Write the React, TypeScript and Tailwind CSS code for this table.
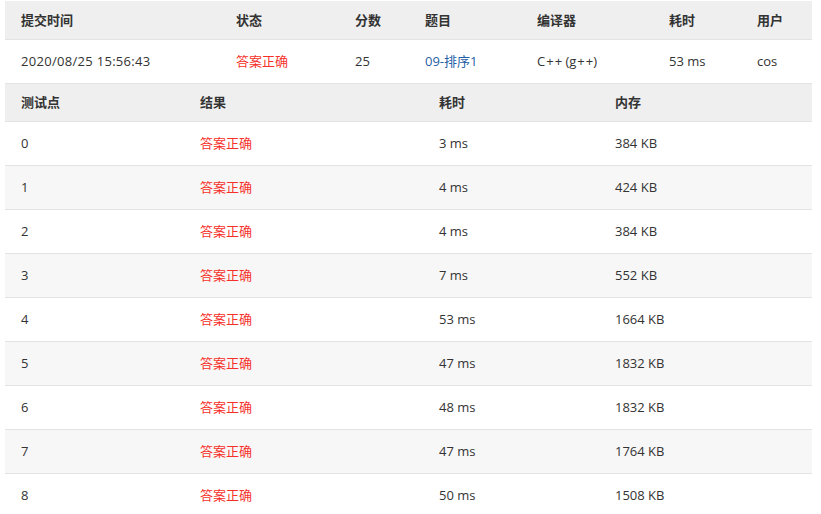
const font = { fontFamily: '"Open Sans", "Noto Sans CJK SC", sans-serif' }

const cases = [
  ['0', '3 ms', '384 KB'],
  ['1', '4 ms', '424 KB'],
  ['2', '4 ms', '384 KB'],
  ['3', '7 ms', '552 KB'],
  ['4', '53 ms', '1664 KB'],
  ['5', '47 ms', '1832 KB'],
  ['6', '48 ms', '1832 KB'],
  ['7', '47 ms', '1764 KB'],
  ['8', '50 ms', '1508 KB'],
]

export default function App() {
  return (
    <div className="w-[821px] h-[514px] overflow-hidden bg-white pt-px px-[5px] text-[13px] text-[#333]" style={font}>
      <div className="w-[807px]">
        <table className="w-full table-fixed border-collapse">
          <colgroup>
            <col className="w-[215px]" />
            <col className="w-[119px]" />
            <col className="w-[70px]" />
            <col className="w-[112px]" />
            <col className="w-[132px]" />
            <col className="w-[88px]" />
            <col />
          </colgroup>
          <thead>
            <tr className="h-[38px] bg-[#efefef] border-b border-[#e3e3e3] font-bold text-left">
              <th className="pl-4 pt-[2px] font-bold">提交时间</th>
              <th className="pl-4 pt-[2px] font-bold">状态</th>
              <th className="pl-4 pt-[2px] font-bold">分数</th>
              <th className="pl-4 pt-[2px] font-bold">题目</th>
              <th className="pl-4 pt-[2px] font-bold">编译器</th>
              <th className="pl-4 pt-[2px] font-bold">耗时</th>
              <th className="pl-4 pt-[2px] font-bold">用户</th>
            </tr>
          </thead>
          <tbody>
            <tr className="h-[44px] border-b border-[#e3e3e3]">
              <td className="pl-4 pt-[2px] tracking-[0.3px]">2020/08/25 15:56:43</td>
              <td className="pl-4 pt-[2px] text-[#f5312a]">答案正确</td>
              <td className="pl-4 pt-[2px]">25</td>
              <td className="pl-4 pt-[2px] text-[#1f5fa6]">09-排序1</td>
              <td className="pl-4 pt-[2px]">C<span className="px-[1px]">+</span>+ (g<span className="px-[1px]">+</span>+)</td>
              <td className="pl-4 pt-[2px]">53 ms</td>
              <td className="pl-4 pt-[2px]">cos</td>
            </tr>
          </tbody>
        </table>

        <table className="w-full table-fixed border-collapse">
          <colgroup>
            <col className="w-[179px]" />
            <col className="w-[239px]" />
            <col className="w-[176px]" />
            <col />
          </colgroup>
          <thead>
            <tr className="h-[38px] bg-[#efefef] border-b border-[#e3e3e3] text-left">
              <th className="pl-4 font-bold">测试点</th>
              <th className="pl-4 font-bold">结果</th>
              <th className="pl-4 font-bold">耗时</th>
              <th className="pl-4 font-bold">内存</th>
            </tr>
          </thead>
          <tbody>
            {cases.map(([id, time, mem], i) => (
              <tr key={id} className={`h-[44px] border-b border-[#e3e3e3] ${i % 2 === 1 ? 'bg-[#f7f7f7]' : 'bg-white'}`}>
                <td className="pl-4">{id}</td>
                <td className="pl-4 text-[#f5312a]">答案正确</td>
                <td className="pl-4">{time}</td>
                <td className="pl-4">{mem}</td>
              </tr>
            ))}
          </tbody>
        </table>
      </div>
    </div>
  )
}
